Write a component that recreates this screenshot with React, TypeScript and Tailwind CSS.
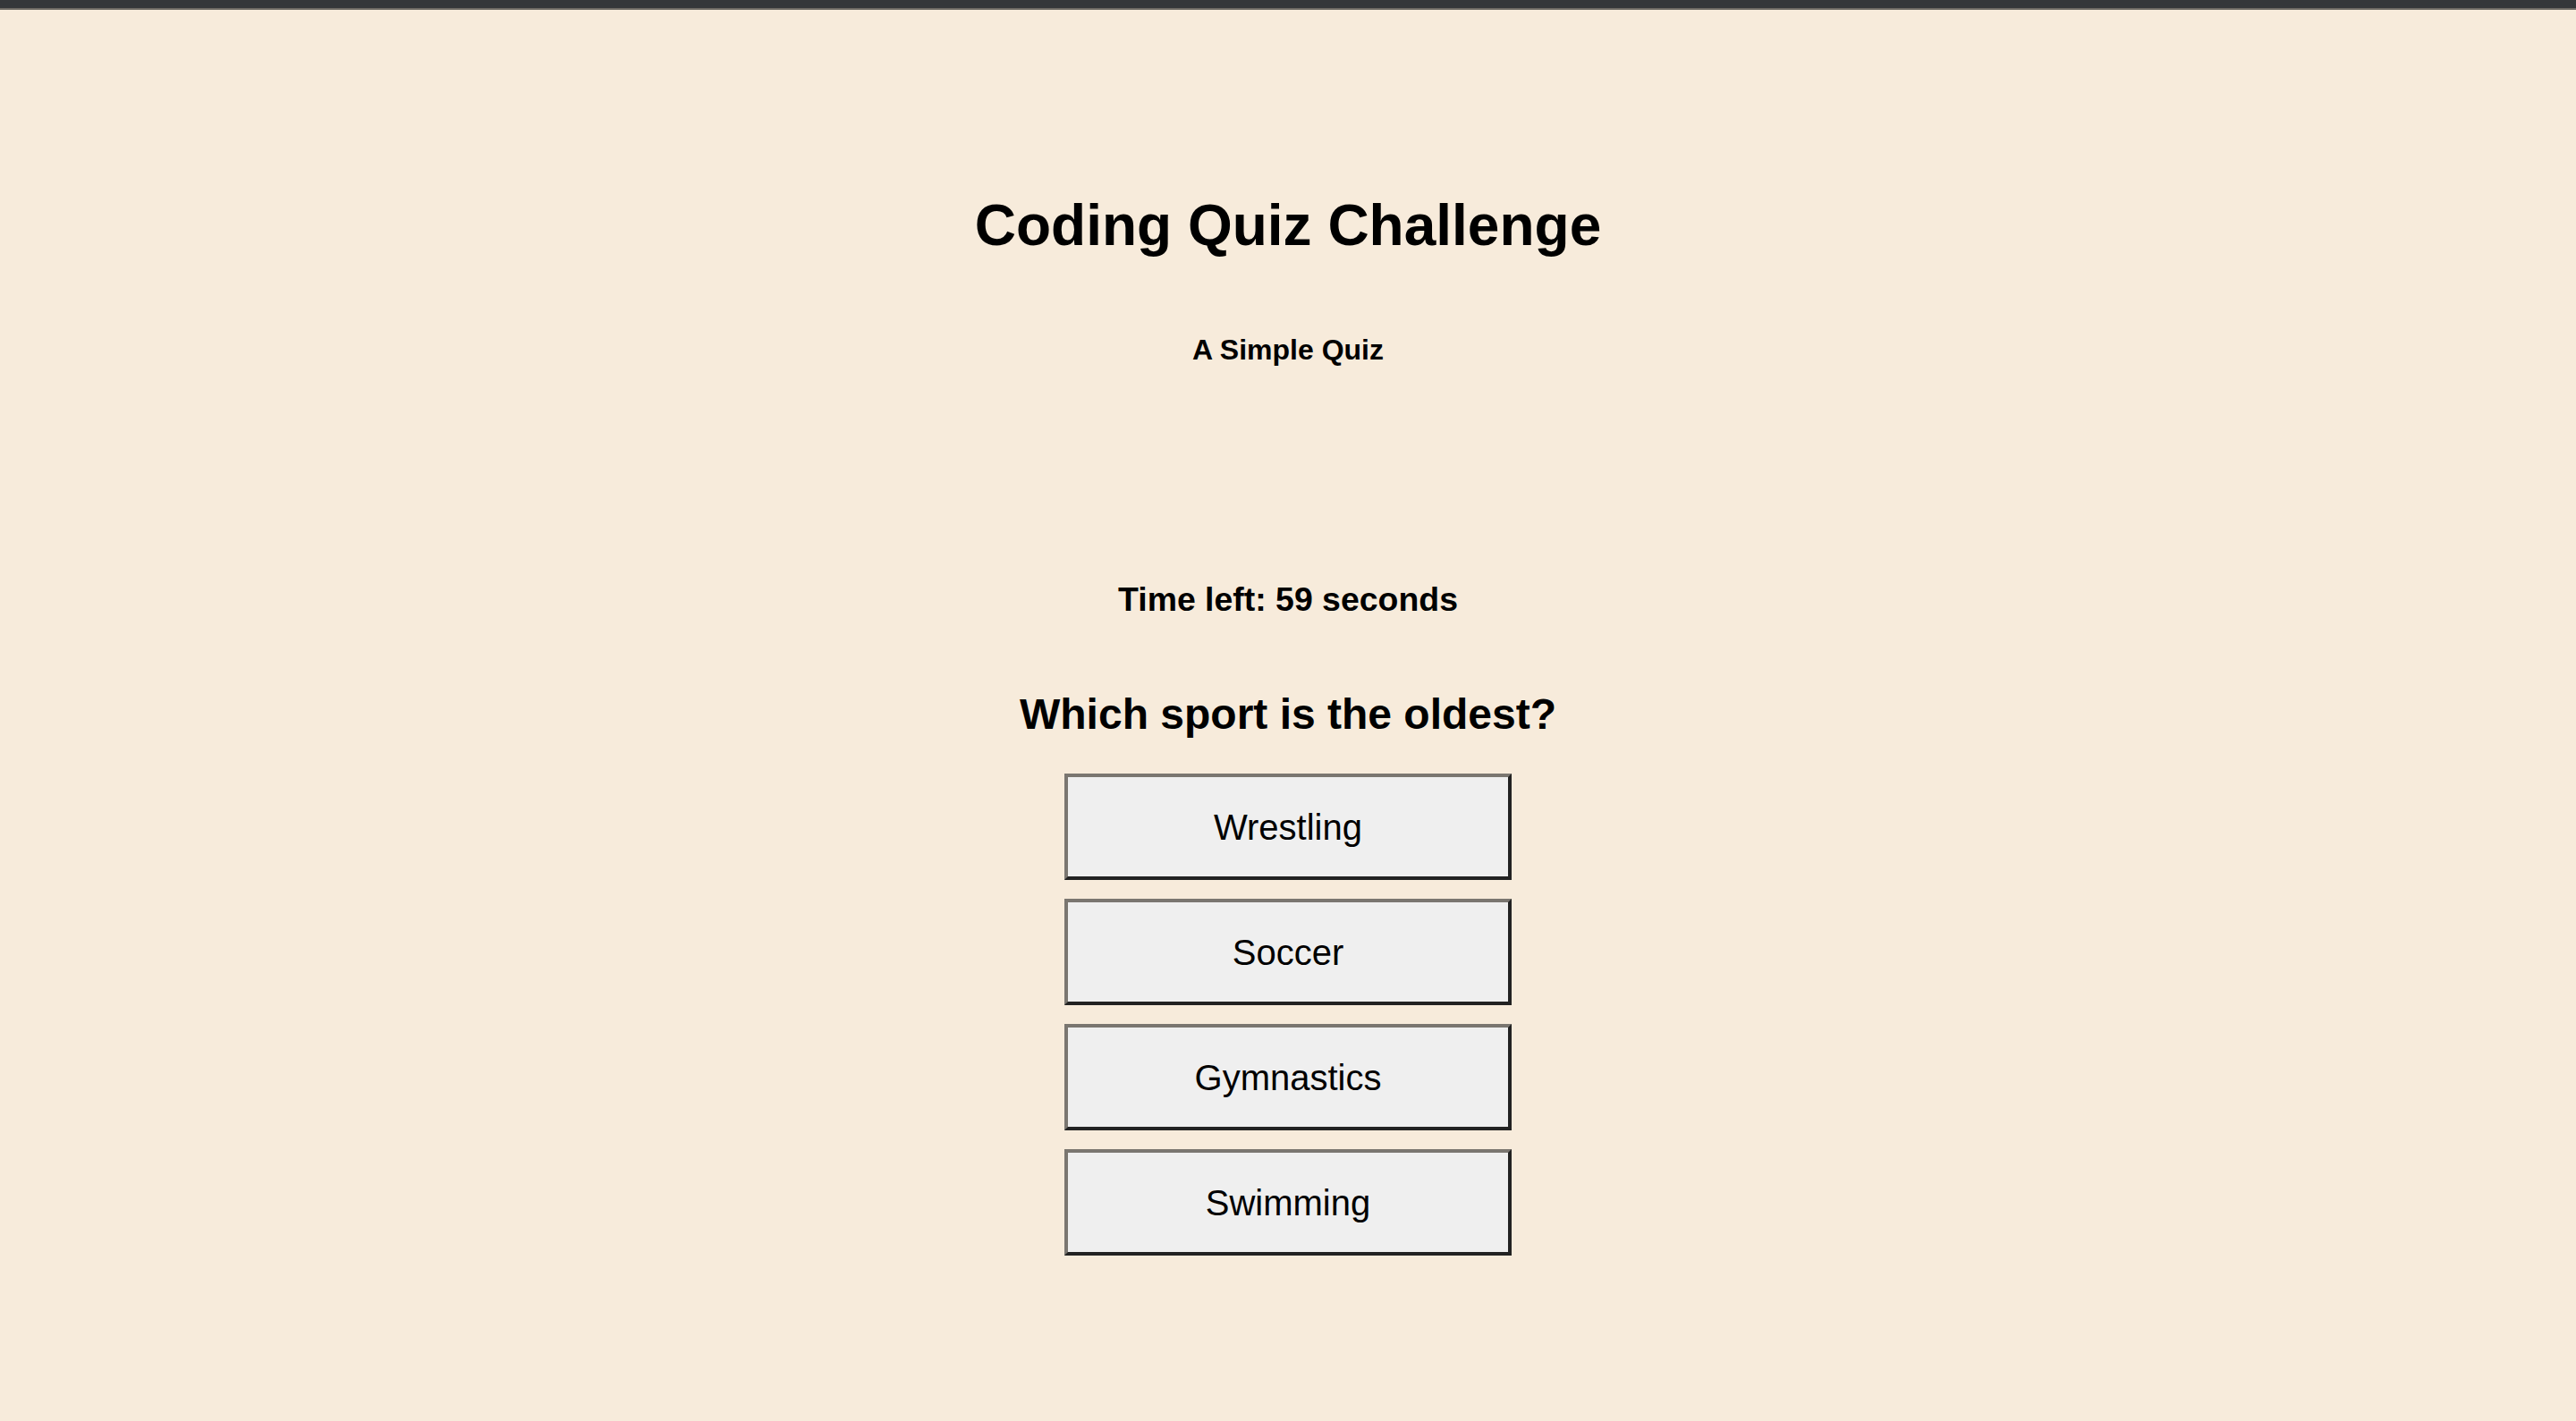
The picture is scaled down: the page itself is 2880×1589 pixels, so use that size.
const answers = ['Wrestling', 'Soccer', 'Gymnastics', 'Swimming'];

export default function App() {
  return (
    <div className="min-h-screen bg-[#f7ebdb] text-black font-['Liberation_Sans',Arial,sans-serif]">
      {/* top strip */}
      <div className="h-[9px] bg-[#35373a]" />
      <div className="h-[2px] bg-[#6f6b65]" />

      <div className="flex flex-col items-center">
        {/* Header */}
        <h1 className="mt-[204px] text-[64px] leading-[74px] font-bold">Coding Quiz Challenge</h1>
        <p className="mt-[84px] text-[32px] leading-[37px] font-bold">A Simple Quiz</p>

        {/* Timer */}
        <h3 className="mt-[239px] text-[37.44px] leading-[43px] font-bold">Time left: 59 seconds</h3>

        {/* Question */}
        <h2 className="mt-[79px] text-[48px] leading-[55px] font-bold">Which sport is the oldest?</h2>

        <div className="mt-[39px] flex flex-col gap-[21px]">
          {answers.map((answer) => (
            <button
              key={answer}
              className="w-[500px] h-[119px] bg-[#efefef] text-[40px] border-[4px] border-t-[#7a7670] border-l-[#7a7670] border-r-[#222222] border-b-[#222222] flex items-center justify-center"
            >
              {answer}
            </button>
          ))}
        </div>
      </div>
    </div>
  );
}
